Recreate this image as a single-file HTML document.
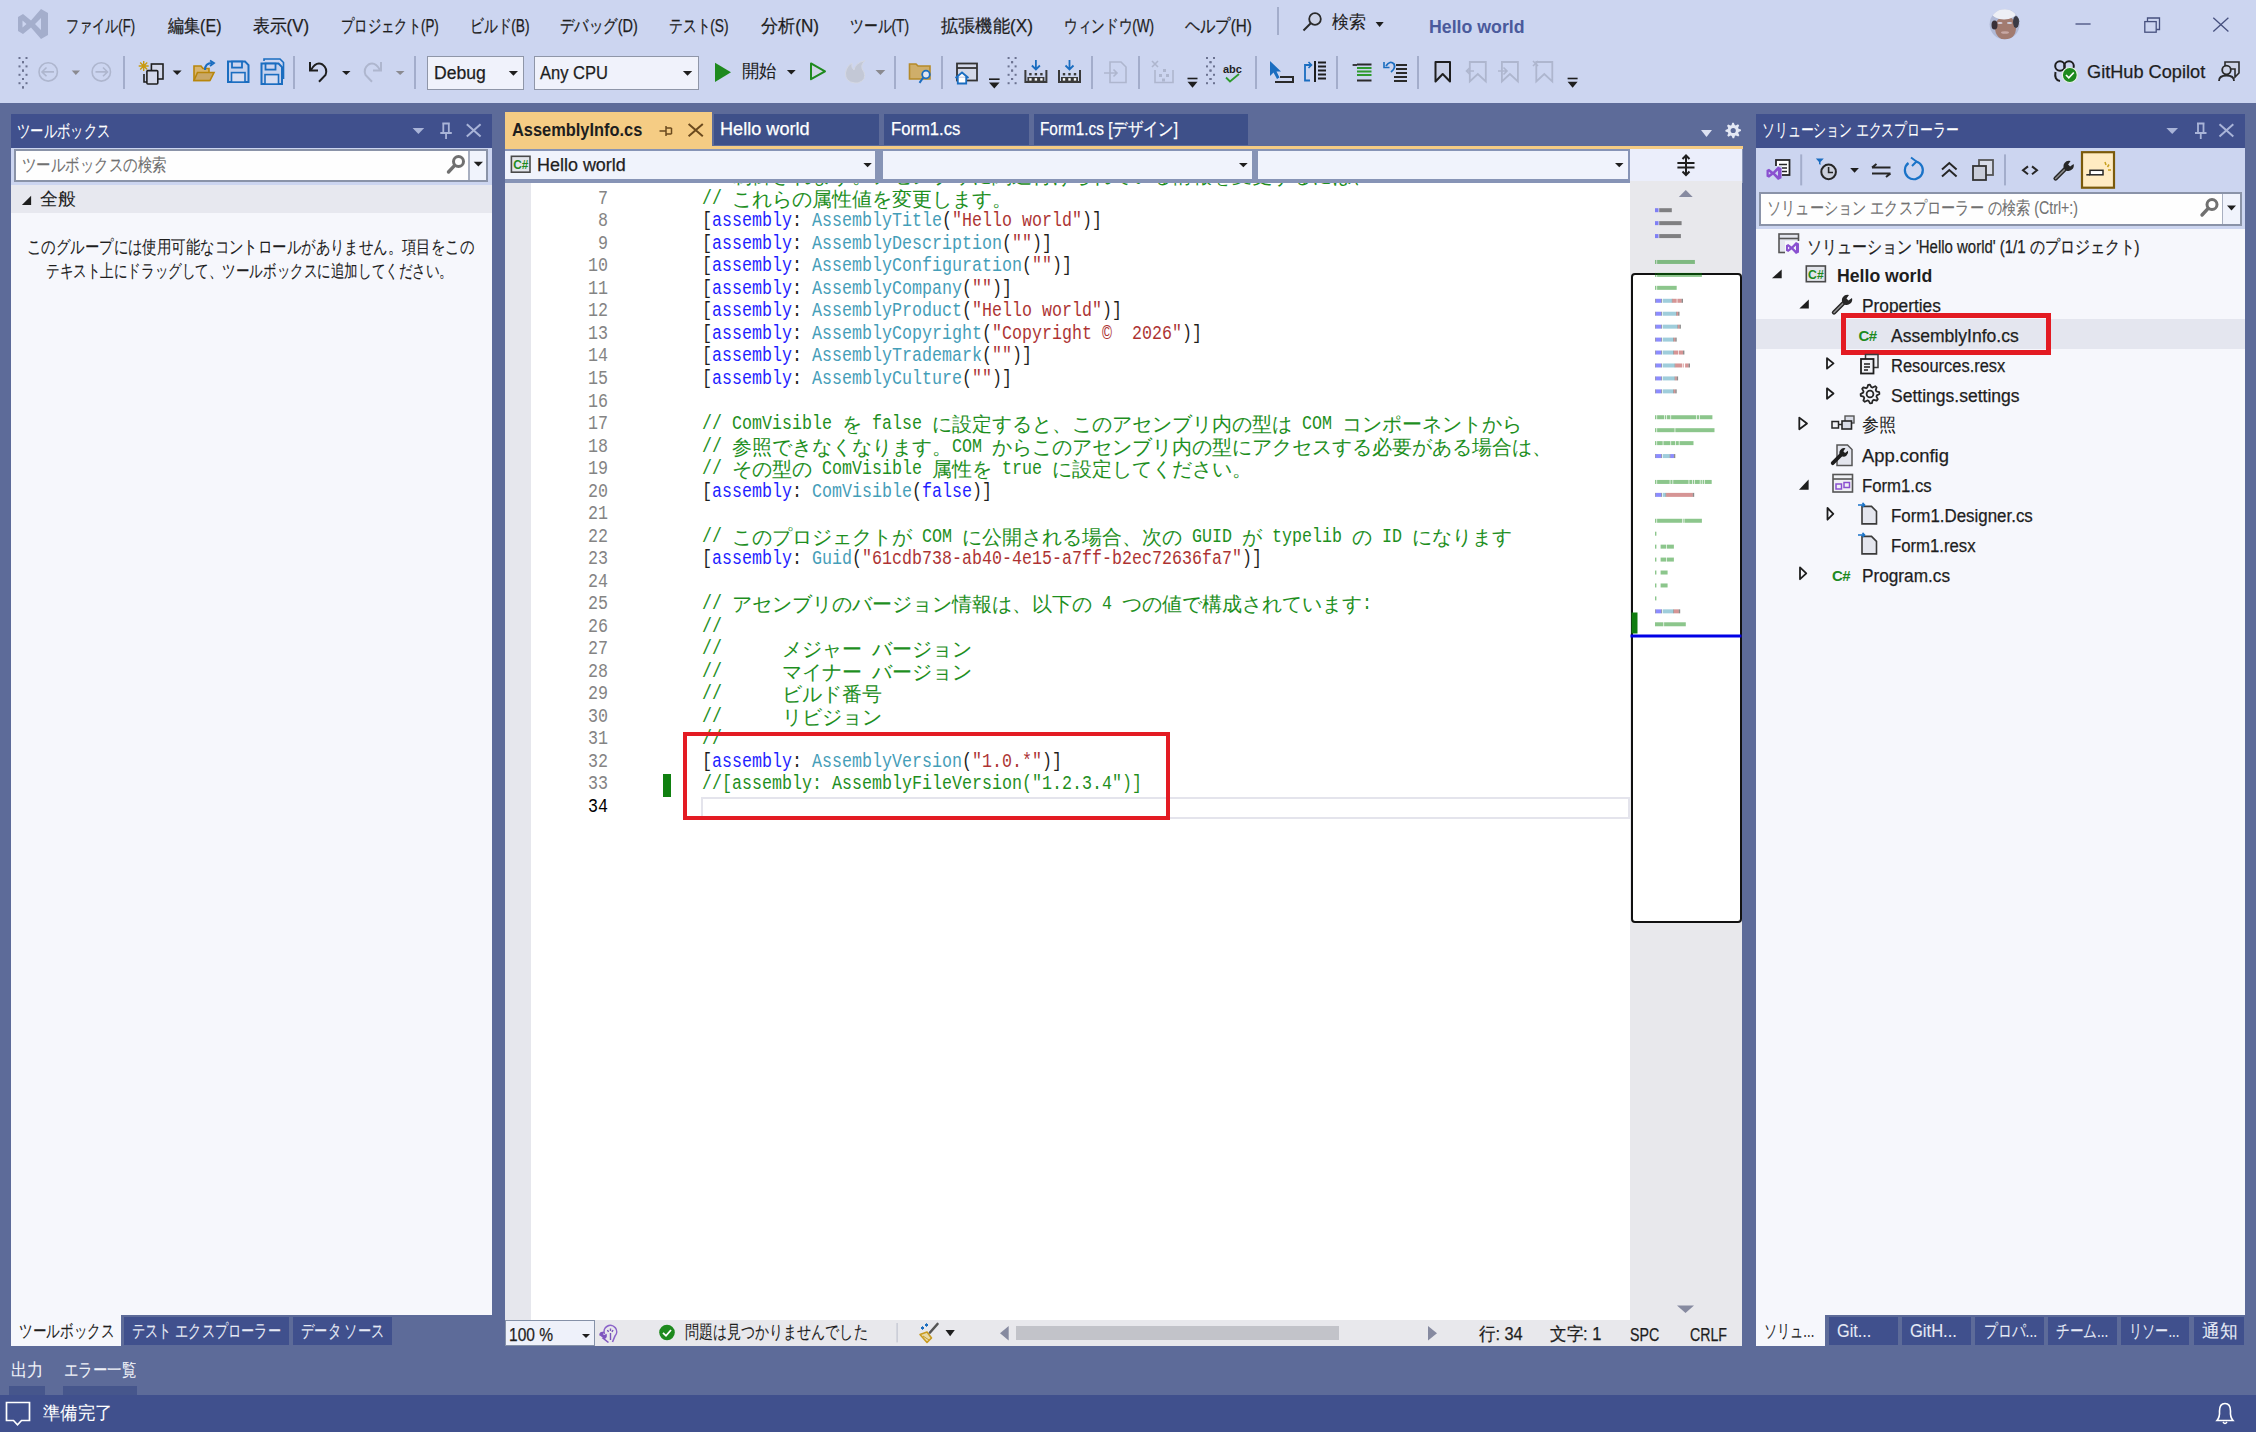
<!DOCTYPE html>
<html lang="ja"><head><meta charset="utf-8"><title>AssemblyInfo.cs - Visual Studio</title><style>
html,body{margin:0;padding:0;width:2256px;height:1432px;overflow:hidden;background:#5D6B99}
body{position:relative;font-family:"Liberation Sans",sans-serif}
body>div,body>svg{position:absolute}
.t{white-space:pre;line-height:1;-webkit-text-stroke:0.25px currentColor}
#ed{position:absolute;left:505px;top:183px;width:1125px;height:1137px;overflow:hidden}
#ed div{position:absolute;white-space:pre;line-height:1;font-family:"Liberation Mono",monospace;font-size:20px}
#ed span{opacity:0.88}
svg{overflow:visible}
</style></head><body>
<div style="left:0px;top:0px;width:2256px;height:103px;background:#CCD5F0;"></div>
<div style="left:0px;top:103px;width:2256px;height:1292px;background:#5D6B99;"></div>
<div style="left:0px;top:1395px;width:2256px;height:37px;background:#40508D;"></div>
<div class="t" style="left:66.0px;top:17.2px;font-size:18px;color:#1E1E1E;font-family:'Liberation Sans';transform:scaleX(0.7264);transform-origin:0 0;">ファイル(F)</div>
<div class="t" style="left:167.5px;top:17.2px;font-size:18px;color:#1E1E1E;font-family:'Liberation Sans';transform:scaleX(0.8917);transform-origin:0 0;">編集(E)</div>
<div class="t" style="left:253.0px;top:17.2px;font-size:18px;color:#1E1E1E;font-family:'Liberation Sans';transform:scaleX(0.9333);transform-origin:0 0;">表示(V)</div>
<div class="t" style="left:341.0px;top:17.2px;font-size:18px;color:#1E1E1E;font-family:'Liberation Sans';transform:scaleX(0.7402);transform-origin:0 0;">プロジェクト(P)</div>
<div class="t" style="left:470.0px;top:17.2px;font-size:18px;color:#1E1E1E;font-family:'Liberation Sans';transform:scaleX(0.7641);transform-origin:0 0;">ビルド(B)</div>
<div class="t" style="left:560.0px;top:17.2px;font-size:18px;color:#1E1E1E;font-family:'Liberation Sans';transform:scaleX(0.8021);transform-origin:0 0;">デバッグ(D)</div>
<div class="t" style="left:668.8px;top:17.2px;font-size:18px;color:#1E1E1E;font-family:'Liberation Sans';transform:scaleX(0.7641);transform-origin:0 0;">テスト(S)</div>
<div class="t" style="left:760.6px;top:17.2px;font-size:18px;color:#1E1E1E;font-family:'Liberation Sans';transform:scaleX(0.9508);transform-origin:0 0;">分析(N)</div>
<div class="t" style="left:850.0px;top:17.2px;font-size:18px;color:#1E1E1E;font-family:'Liberation Sans';transform:scaleX(0.7664);transform-origin:0 0;">ツール(T)</div>
<div class="t" style="left:941.0px;top:17.2px;font-size:18px;color:#1E1E1E;font-family:'Liberation Sans';transform:scaleX(0.9573);transform-origin:0 0;">拡張機能(X)</div>
<div class="t" style="left:1063.9px;top:17.2px;font-size:18px;color:#1E1E1E;font-family:'Liberation Sans';transform:scaleX(0.7572);transform-origin:0 0;">ウィンドウ(W)</div>
<div class="t" style="left:1185.0px;top:17.2px;font-size:18px;color:#1E1E1E;font-family:'Liberation Sans';transform:scaleX(0.8468);transform-origin:0 0;">ヘルプ(H)</div>
<div class="t" style="left:1331.9px;top:13.0px;font-size:18px;color:#1E1E1E;font-family:'Liberation Sans';transform:scaleX(0.9444);transform-origin:0 0;-webkit-text-stroke:0.08px currentColor;">検索</div>
<div class="t" style="left:1428.7px;top:18.2px;font-size:18px;color:#4A5A9C;font-family:'Liberation Sans';font-weight:bold;-webkit-text-stroke:0;transform:scaleX(0.9854);transform-origin:0 0;">Hello world</div>
<div style="left:427.4px;top:55.6px;width:97px;height:34.5px;background:#F0F2FB;border:1.6px solid #8F96A8;box-sizing:border-box"></div>
<div style="left:534.3px;top:55.6px;width:164.5px;height:34.5px;background:#F0F2FB;border:1.6px solid #8F96A8;box-sizing:border-box"></div>
<div class="t" style="left:434.0px;top:64.4px;font-size:18px;color:#1E1E1E;font-family:'Liberation Sans';transform:scaleX(0.9765);transform-origin:0 0;">Debug</div>
<div class="t" style="left:540.0px;top:64.4px;font-size:18px;color:#1E1E1E;font-family:'Liberation Sans';transform:scaleX(0.9185);transform-origin:0 0;">Any CPU</div>
<div class="t" style="left:742.0px;top:62.0px;font-size:18px;color:#1E1E1E;font-family:'Liberation Sans';transform:scaleX(0.9667);transform-origin:0 0;-webkit-text-stroke:0.08px currentColor;">開始</div>
<div class="t" style="left:2087.0px;top:63.3px;font-size:18px;color:#1E1E1E;font-family:'Liberation Sans';transform:scaleX(1.0097);transform-origin:0 0;">GitHub Copilot</div>
<div style="left:11px;top:114px;width:481px;height:34px;background:#40508D;"></div>
<div style="left:11px;top:148px;width:481px;height:37px;background:#CCD5F0;"></div>
<div style="left:14px;top:149px;width:474px;height:33px;background:#FEFEFE;border:2px solid #8A93A8;box-sizing:border-box"></div>
<div style="left:468px;top:151px;width:1.5px;height:29px;background:#A8AFC0;"></div>
<div style="left:469.5px;top:151px;width:16.5px;height:29px;background:#F0F3FC;"></div>
<div style="left:11px;top:185px;width:481px;height:28px;background:#E7E8EF;"></div>
<div style="left:11px;top:213px;width:481px;height:1102px;background:#F6F7FC;"></div>
<div style="left:11px;top:1315px;width:110px;height:31px;background:#F6F7FC;"></div>
<div class="t" style="left:17.3px;top:122.2px;font-size:18px;color:#FFFFFF;font-family:'Liberation Sans';transform:scaleX(0.7405);transform-origin:0 0;-webkit-text-stroke:0.08px currentColor;">ツールボックス</div>
<div class="t" style="left:21.9px;top:155.6px;font-size:18px;color:#717171;font-family:'Liberation Sans';transform:scaleX(0.8028);transform-origin:0 0;-webkit-text-stroke:0.08px currentColor;">ツールボックスの検索</div>
<div class="t" style="left:40.3px;top:190.2px;font-size:18px;color:#1E1E1E;font-family:'Liberation Sans';transform:scaleX(0.9917);transform-origin:0 0;-webkit-text-stroke:0.08px currentColor;">全般</div>
<div class="t" style="left:26.5px;top:237.5px;font-size:18px;color:#1E1E1E;font-family:'Liberation Sans';transform:scaleX(0.8014);transform-origin:0 0;-webkit-text-stroke:0.08px currentColor;">このグループには使用可能なコントロールがありません。項目をこの</div>
<div class="t" style="left:46.1px;top:261.7px;font-size:18px;color:#1E1E1E;font-family:'Liberation Sans';transform:scaleX(0.7535);transform-origin:0 0;-webkit-text-stroke:0.08px currentColor;">テキスト上にドラッグして、ツールボックスに追加してください。</div>
<div style="left:124px;top:1317px;width:165px;height:28px;background:#40508D;"></div>
<div style="left:293px;top:1317px;width:99px;height:28px;background:#40508D;"></div>
<div class="t" style="left:18.5px;top:1321.7px;font-size:18px;color:#1E1E1E;font-family:'Liberation Sans';transform:scaleX(0.7571);transform-origin:0 0;-webkit-text-stroke:0.08px currentColor;">ツールボックス</div>
<div class="t" style="left:132.4px;top:1321.7px;font-size:18px;color:#E6EAF5;font-family:'Liberation Sans';transform:scaleX(0.7334);transform-origin:0 0;-webkit-text-stroke:0.08px currentColor;">テスト エクスプローラー</div>
<div class="t" style="left:300.9px;top:1321.7px;font-size:18px;color:#E6EAF5;font-family:'Liberation Sans';transform:scaleX(0.7362);transform-origin:0 0;-webkit-text-stroke:0.08px currentColor;">データ ソース</div>
<div class="t" style="left:10.9px;top:1361.0px;font-size:18px;color:#F0F2F8;font-family:'Liberation Sans';transform:scaleX(0.9000);transform-origin:0 0;-webkit-text-stroke:0.08px currentColor;">出力</div>
<div class="t" style="left:64.0px;top:1361.0px;font-size:18px;color:#F0F2F8;font-family:'Liberation Sans';transform:scaleX(0.8000);transform-origin:0 0;-webkit-text-stroke:0.08px currentColor;">エラー一覧</div>
<div style="left:9px;top:1386px;width:36px;height:9px;background:#46568C;"></div>
<div style="left:63px;top:1386px;width:74px;height:9px;background:#46568C;"></div>
<div class="t" style="left:42.9px;top:1404.0px;font-size:18px;color:#FFFFFF;font-family:'Liberation Sans';transform:scaleX(0.9597);transform-origin:0 0;-webkit-text-stroke:0.08px currentColor;">準備完了</div>
<div style="left:505px;top:112px;width:207px;height:34px;background:#F5CC84;"></div>
<div style="left:714px;top:114px;width:165px;height:31px;background:#3E5089;"></div>
<div style="left:884px;top:114px;width:145px;height:31px;background:#3E5089;"></div>
<div style="left:1034px;top:114px;width:214px;height:31px;background:#3E5089;"></div>
<div style="left:505px;top:146px;width:1238px;height:3px;background:#F5CC84;"></div>
<div style="left:505px;top:149px;width:1238px;height:34px;background:#8794B6;"></div>
<div style="left:505px;top:151px;width:370px;height:28px;background:#F0F3FC;"></div>
<div style="left:883px;top:151px;width:369px;height:28px;background:#F0F3FC;"></div>
<div style="left:1258px;top:151px;width:370px;height:28px;background:#F0F3FC;"></div>
<div style="left:1630px;top:149px;width:112px;height:32px;background:#EBEEFB;"></div>
<div class="t" style="left:512.0px;top:120.7px;font-size:18px;color:#1E1E1E;font-family:'Liberation Sans';font-weight:bold;-webkit-text-stroke:0;transform:scaleX(0.9108);transform-origin:0 0;">AssemblyInfo.cs</div>
<div class="t" style="left:720.4px;top:120.0px;font-size:18px;color:#FFFFFF;font-family:'Liberation Sans';transform:scaleX(1.0062);transform-origin:0 0;">Hello world</div>
<div class="t" style="left:890.6px;top:120.0px;font-size:18px;color:#FFFFFF;font-family:'Liberation Sans';transform:scaleX(0.9251);transform-origin:0 0;">Form1.cs</div>
<div class="t" style="left:1040.0px;top:120.0px;font-size:18px;color:#FFFFFF;font-family:'Liberation Sans';transform:scaleX(0.8518);transform-origin:0 0;">Form1.cs [デザイン]</div>
<div class="t" style="left:536.8px;top:156.0px;font-size:18px;color:#1E1E1E;font-family:'Liberation Sans';transform:scaleX(0.9972);transform-origin:0 0;">Hello world</div>
<div style="left:505px;top:183px;width:1125px;height:1137px;background:#FFFFFF;"></div>
<div style="left:505px;top:183px;width:26px;height:1137px;background:#E6E7ED;"></div>
<div style="left:1630px;top:181px;width:112px;height:1139px;background:#E8E8EC;"></div>
<div style="left:505px;top:1320px;width:1237px;height:26px;background:#E8E8EC;"></div>
<div style="left:505px;top:1320px;width:90px;height:26px;background:#EEF1FA;border:1px solid #8591A8;box-sizing:border-box"></div>
<div class="t" style="left:509.0px;top:1326.0px;font-size:18px;color:#1E1E1E;font-family:'Liberation Sans';transform:scaleX(0.8620);transform-origin:0 0;">100 %</div>
<div class="t" style="left:684.8px;top:1323.0px;font-size:18px;color:#1E1E1E;font-family:'Liberation Sans';transform:scaleX(0.7803);transform-origin:0 0;-webkit-text-stroke:0.08px currentColor;">問題は見つかりませんでした</div>
<div class="t" style="left:1479.2px;top:1325.0px;font-size:18px;color:#1E1E1E;font-family:'Liberation Sans';transform:scaleX(0.9098);transform-origin:0 0;">行: 34</div>
<div class="t" style="left:1550.0px;top:1325.0px;font-size:18px;color:#1E1E1E;font-family:'Liberation Sans';transform:scaleX(0.9194);transform-origin:0 0;">文字: 1</div>
<div class="t" style="left:1629.8px;top:1325.5px;font-size:18px;color:#1E1E1E;font-family:'Liberation Sans';transform:scaleX(0.7889);transform-origin:0 0;">SPC</div>
<div class="t" style="left:1690.0px;top:1325.5px;font-size:18px;color:#1E1E1E;font-family:'Liberation Sans';transform:scaleX(0.7870);transform-origin:0 0;">CRLF</div>
<div style="left:1016px;top:1326px;width:323px;height:14px;background:#C2C3C9;"></div>
<div style="left:1756px;top:114px;width:489px;height:34px;background:#40508D;"></div>
<div style="left:1756px;top:148px;width:489px;height:81px;background:#CCD5F0;"></div>
<div style="left:1759px;top:192px;width:483px;height:34px;background:#FEFEFE;border:2px solid #8A93A8;box-sizing:border-box"></div>
<div style="left:2221.5px;top:194px;width:1.5px;height:30px;background:#A8AFC0;"></div>
<div style="left:2223px;top:194px;width:17px;height:30px;background:#F0F3FC;"></div>
<div style="left:1756px;top:229px;width:489px;height:1086px;background:#F6F7FC;"></div>
<div style="left:1756px;top:319px;width:489px;height:30px;background:#E4E6EF;"></div>
<div style="left:1756px;top:1315px;width:69px;height:31px;background:#F6F7FC;"></div>
<div class="t" style="left:1761.7px;top:120.9px;font-size:18px;color:#FFFFFF;font-family:'Liberation Sans';transform:scaleX(0.7152);transform-origin:0 0;-webkit-text-stroke:0.08px currentColor;">ソリューション エクスプローラー</div>
<div class="t" style="left:1767.0px;top:198.6px;font-size:18px;color:#717171;font-family:'Liberation Sans';transform:scaleX(0.7883);transform-origin:0 0;-webkit-text-stroke:0.08px currentColor;">ソリューション エクスプローラー の検索 (Ctrl+:)</div>
<div class="t" style="left:1807.4px;top:238.0px;font-size:18px;color:#1E1E1E;font-family:'Liberation Sans';transform:scaleX(0.8314);transform-origin:0 0;">ソリューション &#x27;Hello world&#x27; (1/1 のプロジェクト)</div>
<div class="t" style="left:1836.7px;top:266.6px;font-size:18px;color:#1E1E1E;font-family:'Liberation Sans';font-weight:bold;-webkit-text-stroke:0;transform:scaleX(0.9813);transform-origin:0 0;">Hello world</div>
<div class="t" style="left:1862.4px;top:296.7px;font-size:18px;color:#1E1E1E;font-family:'Liberation Sans';transform:scaleX(0.9616);transform-origin:0 0;">Properties</div>
<div class="t" style="left:1890.7px;top:326.8px;font-size:18px;color:#1E1E1E;font-family:'Liberation Sans';transform:scaleX(0.9745);transform-origin:0 0;">AssemblyInfo.cs</div>
<div class="t" style="left:1890.7px;top:356.8px;font-size:18px;color:#1E1E1E;font-family:'Liberation Sans';transform:scaleX(0.9141);transform-origin:0 0;">Resources.resx</div>
<div class="t" style="left:1890.7px;top:386.8px;font-size:18px;color:#1E1E1E;font-family:'Liberation Sans';transform:scaleX(0.9737);transform-origin:0 0;">Settings.settings</div>
<div class="t" style="left:1862.4px;top:415.8px;font-size:18px;color:#1E1E1E;font-family:'Liberation Sans';transform:scaleX(0.9528);transform-origin:0 0;-webkit-text-stroke:0.08px currentColor;">参照</div>
<div class="t" style="left:1862.4px;top:446.8px;font-size:18px;color:#1E1E1E;font-family:'Liberation Sans';transform:scaleX(1.0216);transform-origin:0 0;">App.config</div>
<div class="t" style="left:1862.4px;top:476.8px;font-size:18px;color:#1E1E1E;font-family:'Liberation Sans';transform:scaleX(0.9291);transform-origin:0 0;">Form1.cs</div>
<div class="t" style="left:1891.0px;top:506.8px;font-size:18px;color:#1E1E1E;font-family:'Liberation Sans';transform:scaleX(0.9387);transform-origin:0 0;">Form1.Designer.cs</div>
<div class="t" style="left:1891.0px;top:536.8px;font-size:18px;color:#1E1E1E;font-family:'Liberation Sans';transform:scaleX(0.9295);transform-origin:0 0;">Form1.resx</div>
<div class="t" style="left:1862.4px;top:566.8px;font-size:18px;color:#1E1E1E;font-family:'Liberation Sans';transform:scaleX(0.9562);transform-origin:0 0;">Program.cs</div>
<div class="t" style="left:1764.0px;top:1322.3px;font-size:18px;color:#1E1E1E;font-family:'Liberation Sans';transform:scaleX(0.7288);transform-origin:0 0;-webkit-text-stroke:0.08px currentColor;">ソリュ...</div>
<div style="left:1829px;top:1317px;width:69px;height:28px;background:#40508D;"></div>
<div class="t" style="left:1837.2px;top:1322.3px;font-size:18px;color:#E6EAF5;font-family:'Liberation Sans';transform:scaleX(0.9023);transform-origin:0 0;-webkit-text-stroke:0.08px currentColor;">Git...</div>
<div style="left:1902px;top:1317px;width:69px;height:28px;background:#40508D;"></div>
<div class="t" style="left:1910.4px;top:1322.3px;font-size:18px;color:#E6EAF5;font-family:'Liberation Sans';transform:scaleX(0.9193);transform-origin:0 0;-webkit-text-stroke:0.08px currentColor;">GitH...</div>
<div style="left:1975px;top:1317px;width:69px;height:28px;background:#40508D;"></div>
<div class="t" style="left:1983.6px;top:1322.3px;font-size:18px;color:#E6EAF5;font-family:'Liberation Sans';transform:scaleX(0.7694);transform-origin:0 0;-webkit-text-stroke:0.08px currentColor;">プロパ...</div>
<div style="left:2048px;top:1317px;width:69px;height:28px;background:#40508D;"></div>
<div class="t" style="left:2056.0px;top:1322.3px;font-size:18px;color:#E6EAF5;font-family:'Liberation Sans';transform:scaleX(0.7578);transform-origin:0 0;-webkit-text-stroke:0.08px currentColor;">チーム...</div>
<div style="left:2121px;top:1317px;width:68px;height:28px;background:#40508D;"></div>
<div class="t" style="left:2128.8px;top:1322.3px;font-size:18px;color:#E6EAF5;font-family:'Liberation Sans';transform:scaleX(0.7303);transform-origin:0 0;-webkit-text-stroke:0.08px currentColor;">リソー...</div>
<div style="left:2194px;top:1317px;width:50px;height:28px;background:#40508D;"></div>
<div class="t" style="left:2202.0px;top:1322.3px;font-size:18px;color:#E6EAF5;font-family:'Liberation Sans';transform:scaleX(0.9861);transform-origin:0 0;-webkit-text-stroke:0.08px currentColor;">通知</div>
<div style="left:1841px;top:313px;width:210px;height:42px;background:transparent;border:5px solid #E31B23;box-sizing:border-box"></div>
<div id="ed"><div style="left:195.5px;top:613.8px;width:925.5px;height:18px;border:2px solid #E4E4EC;box-sizing:content-box"></div><div style="left:93px;top:-16.7px;color:#848484;transform:scaleX(0.8333);transform-origin:0 0">6</div><div style="left:197px;top:-16.7px;transform:scaleX(0.8333);transform-origin:0 0"><span style="color:#008000">// </span></div><div style="left:227px;top:-14.7px"><span style="color:#008000">制御されます。アセンブリに関連付けられている情報を変更するには、</span></div><div style="left:93px;top:5.8px;color:#848484;transform:scaleX(0.8333);transform-origin:0 0">7</div><div style="left:197px;top:5.8px;transform:scaleX(0.8333);transform-origin:0 0"><span style="color:#008000">// </span></div><div style="left:227px;top:7.8px"><span style="color:#008000">これらの属性値を変更します。</span></div><div style="left:93px;top:28.3px;color:#848484;transform:scaleX(0.8333);transform-origin:0 0">8</div><div style="left:197px;top:28.3px;transform:scaleX(0.8333);transform-origin:0 0"><span style="color:#000000">[</span><span style="color:#0000FF">assembly</span><span style="color:#000000">: </span><span style="color:#2B91AF">AssemblyTitle</span><span style="color:#000000">(</span><span style="color:#A31515">&quot;Hello world&quot;</span><span style="color:#000000">)]</span></div><div style="left:93px;top:50.8px;color:#848484;transform:scaleX(0.8333);transform-origin:0 0">9</div><div style="left:197px;top:50.8px;transform:scaleX(0.8333);transform-origin:0 0"><span style="color:#000000">[</span><span style="color:#0000FF">assembly</span><span style="color:#000000">: </span><span style="color:#2B91AF">AssemblyDescription</span><span style="color:#000000">(</span><span style="color:#A31515">&quot;&quot;</span><span style="color:#000000">)]</span></div><div style="left:83px;top:73.4px;color:#848484;transform:scaleX(0.8333);transform-origin:0 0">10</div><div style="left:197px;top:73.4px;transform:scaleX(0.8333);transform-origin:0 0"><span style="color:#000000">[</span><span style="color:#0000FF">assembly</span><span style="color:#000000">: </span><span style="color:#2B91AF">AssemblyConfiguration</span><span style="color:#000000">(</span><span style="color:#A31515">&quot;&quot;</span><span style="color:#000000">)]</span></div><div style="left:83px;top:95.9px;color:#848484;transform:scaleX(0.8333);transform-origin:0 0">11</div><div style="left:197px;top:95.9px;transform:scaleX(0.8333);transform-origin:0 0"><span style="color:#000000">[</span><span style="color:#0000FF">assembly</span><span style="color:#000000">: </span><span style="color:#2B91AF">AssemblyCompany</span><span style="color:#000000">(</span><span style="color:#A31515">&quot;&quot;</span><span style="color:#000000">)]</span></div><div style="left:83px;top:118.4px;color:#848484;transform:scaleX(0.8333);transform-origin:0 0">12</div><div style="left:197px;top:118.4px;transform:scaleX(0.8333);transform-origin:0 0"><span style="color:#000000">[</span><span style="color:#0000FF">assembly</span><span style="color:#000000">: </span><span style="color:#2B91AF">AssemblyProduct</span><span style="color:#000000">(</span><span style="color:#A31515">&quot;Hello world&quot;</span><span style="color:#000000">)]</span></div><div style="left:83px;top:140.9px;color:#848484;transform:scaleX(0.8333);transform-origin:0 0">13</div><div style="left:197px;top:140.9px;transform:scaleX(0.8333);transform-origin:0 0"><span style="color:#000000">[</span><span style="color:#0000FF">assembly</span><span style="color:#000000">: </span><span style="color:#2B91AF">AssemblyCopyright</span><span style="color:#000000">(</span><span style="color:#A31515">&quot;Copyright ©  2026&quot;</span><span style="color:#000000">)]</span></div><div style="left:83px;top:163.4px;color:#848484;transform:scaleX(0.8333);transform-origin:0 0">14</div><div style="left:197px;top:163.4px;transform:scaleX(0.8333);transform-origin:0 0"><span style="color:#000000">[</span><span style="color:#0000FF">assembly</span><span style="color:#000000">: </span><span style="color:#2B91AF">AssemblyTrademark</span><span style="color:#000000">(</span><span style="color:#A31515">&quot;&quot;</span><span style="color:#000000">)]</span></div><div style="left:83px;top:186.0px;color:#848484;transform:scaleX(0.8333);transform-origin:0 0">15</div><div style="left:197px;top:186.0px;transform:scaleX(0.8333);transform-origin:0 0"><span style="color:#000000">[</span><span style="color:#0000FF">assembly</span><span style="color:#000000">: </span><span style="color:#2B91AF">AssemblyCulture</span><span style="color:#000000">(</span><span style="color:#A31515">&quot;&quot;</span><span style="color:#000000">)]</span></div><div style="left:83px;top:208.5px;color:#848484;transform:scaleX(0.8333);transform-origin:0 0">16</div><div style="left:83px;top:231.0px;color:#848484;transform:scaleX(0.8333);transform-origin:0 0">17</div><div style="left:197px;top:231.0px;transform:scaleX(0.8333);transform-origin:0 0"><span style="color:#008000">// ComVisible </span></div><div style="left:337px;top:233.0px"><span style="color:#008000">を</span></div><div style="left:357px;top:231.0px;transform:scaleX(0.8333);transform-origin:0 0"><span style="color:#008000"> false </span></div><div style="left:427px;top:233.0px"><span style="color:#008000">に設定すると、このアセンブリ内の型は</span></div><div style="left:787px;top:231.0px;transform:scaleX(0.8333);transform-origin:0 0"><span style="color:#008000"> COM </span></div><div style="left:837px;top:233.0px"><span style="color:#008000">コンポーネントから</span></div><div style="left:83px;top:253.5px;color:#848484;transform:scaleX(0.8333);transform-origin:0 0">18</div><div style="left:197px;top:253.5px;transform:scaleX(0.8333);transform-origin:0 0"><span style="color:#008000">// </span></div><div style="left:227px;top:255.5px"><span style="color:#008000">参照できなくなります。</span></div><div style="left:447px;top:253.5px;transform:scaleX(0.8333);transform-origin:0 0"><span style="color:#008000">COM </span></div><div style="left:487px;top:255.5px"><span style="color:#008000">からこのアセンブリ内の型にアクセスする必要がある場合は、</span></div><div style="left:83px;top:276.0px;color:#848484;transform:scaleX(0.8333);transform-origin:0 0">19</div><div style="left:197px;top:276.0px;transform:scaleX(0.8333);transform-origin:0 0"><span style="color:#008000">// </span></div><div style="left:227px;top:278.0px"><span style="color:#008000">その型の</span></div><div style="left:307px;top:276.0px;transform:scaleX(0.8333);transform-origin:0 0"><span style="color:#008000"> ComVisible </span></div><div style="left:427px;top:278.0px"><span style="color:#008000">属性を</span></div><div style="left:487px;top:276.0px;transform:scaleX(0.8333);transform-origin:0 0"><span style="color:#008000"> true </span></div><div style="left:547px;top:278.0px"><span style="color:#008000">に設定してください。</span></div><div style="left:83px;top:298.6px;color:#848484;transform:scaleX(0.8333);transform-origin:0 0">20</div><div style="left:197px;top:298.6px;transform:scaleX(0.8333);transform-origin:0 0"><span style="color:#000000">[</span><span style="color:#0000FF">assembly</span><span style="color:#000000">: </span><span style="color:#2B91AF">ComVisible</span><span style="color:#000000">(</span><span style="color:#0000FF">false</span><span style="color:#000000">)]</span></div><div style="left:83px;top:321.1px;color:#848484;transform:scaleX(0.8333);transform-origin:0 0">21</div><div style="left:83px;top:343.6px;color:#848484;transform:scaleX(0.8333);transform-origin:0 0">22</div><div style="left:197px;top:343.6px;transform:scaleX(0.8333);transform-origin:0 0"><span style="color:#008000">// </span></div><div style="left:227px;top:345.6px"><span style="color:#008000">このプロジェクトが</span></div><div style="left:407px;top:343.6px;transform:scaleX(0.8333);transform-origin:0 0"><span style="color:#008000"> COM </span></div><div style="left:457px;top:345.6px"><span style="color:#008000">に公開される場合、次の</span></div><div style="left:677px;top:343.6px;transform:scaleX(0.8333);transform-origin:0 0"><span style="color:#008000"> GUID </span></div><div style="left:737px;top:345.6px"><span style="color:#008000">が</span></div><div style="left:757px;top:343.6px;transform:scaleX(0.8333);transform-origin:0 0"><span style="color:#008000"> typelib </span></div><div style="left:847px;top:345.6px"><span style="color:#008000">の</span></div><div style="left:867px;top:343.6px;transform:scaleX(0.8333);transform-origin:0 0"><span style="color:#008000"> ID </span></div><div style="left:907px;top:345.6px"><span style="color:#008000">になります</span></div><div style="left:83px;top:366.1px;color:#848484;transform:scaleX(0.8333);transform-origin:0 0">23</div><div style="left:197px;top:366.1px;transform:scaleX(0.8333);transform-origin:0 0"><span style="color:#000000">[</span><span style="color:#0000FF">assembly</span><span style="color:#000000">: </span><span style="color:#2B91AF">Guid</span><span style="color:#000000">(</span><span style="color:#A31515">&quot;61cdb738-ab40-4e15-a7ff-b2ec72636fa7&quot;</span><span style="color:#000000">)]</span></div><div style="left:83px;top:388.6px;color:#848484;transform:scaleX(0.8333);transform-origin:0 0">24</div><div style="left:83px;top:411.2px;color:#848484;transform:scaleX(0.8333);transform-origin:0 0">25</div><div style="left:197px;top:411.2px;transform:scaleX(0.8333);transform-origin:0 0"><span style="color:#008000">// </span></div><div style="left:227px;top:413.2px"><span style="color:#008000">アセンブリのバージョン情報は、以下の</span></div><div style="left:587px;top:411.2px;transform:scaleX(0.8333);transform-origin:0 0"><span style="color:#008000"> 4 </span></div><div style="left:617px;top:413.2px"><span style="color:#008000">つの値で構成されています</span></div><div style="left:857px;top:411.2px;transform:scaleX(0.8333);transform-origin:0 0"><span style="color:#008000">:</span></div><div style="left:83px;top:433.7px;color:#848484;transform:scaleX(0.8333);transform-origin:0 0">26</div><div style="left:197px;top:433.7px;transform:scaleX(0.8333);transform-origin:0 0"><span style="color:#008000">//</span></div><div style="left:83px;top:456.2px;color:#848484;transform:scaleX(0.8333);transform-origin:0 0">27</div><div style="left:197px;top:456.2px;transform:scaleX(0.8333);transform-origin:0 0"><span style="color:#008000">//      </span></div><div style="left:277px;top:458.2px"><span style="color:#008000">メジャー</span></div><div style="left:357px;top:456.2px;transform:scaleX(0.8333);transform-origin:0 0"><span style="color:#008000"> </span></div><div style="left:367px;top:458.2px"><span style="color:#008000">バージョン</span></div><div style="left:83px;top:478.7px;color:#848484;transform:scaleX(0.8333);transform-origin:0 0">28</div><div style="left:197px;top:478.7px;transform:scaleX(0.8333);transform-origin:0 0"><span style="color:#008000">//      </span></div><div style="left:277px;top:480.7px"><span style="color:#008000">マイナー</span></div><div style="left:357px;top:478.7px;transform:scaleX(0.8333);transform-origin:0 0"><span style="color:#008000"> </span></div><div style="left:367px;top:480.7px"><span style="color:#008000">バージョン</span></div><div style="left:83px;top:501.2px;color:#848484;transform:scaleX(0.8333);transform-origin:0 0">29</div><div style="left:197px;top:501.2px;transform:scaleX(0.8333);transform-origin:0 0"><span style="color:#008000">//      </span></div><div style="left:277px;top:503.2px"><span style="color:#008000">ビルド番号</span></div><div style="left:83px;top:523.8px;color:#848484;transform:scaleX(0.8333);transform-origin:0 0">30</div><div style="left:197px;top:523.8px;transform:scaleX(0.8333);transform-origin:0 0"><span style="color:#008000">//      </span></div><div style="left:277px;top:525.8px"><span style="color:#008000">リビジョン</span></div><div style="left:83px;top:546.3px;color:#848484;transform:scaleX(0.8333);transform-origin:0 0">31</div><div style="left:197px;top:546.3px;transform:scaleX(0.8333);transform-origin:0 0"><span style="color:#008000">//</span></div><div style="left:83px;top:568.8px;color:#848484;transform:scaleX(0.8333);transform-origin:0 0">32</div><div style="left:197px;top:568.8px;transform:scaleX(0.8333);transform-origin:0 0"><span style="color:#000000">[</span><span style="color:#0000FF">assembly</span><span style="color:#000000">: </span><span style="color:#2B91AF">AssemblyVersion</span><span style="color:#000000">(</span><span style="color:#A31515">&quot;1.0.*&quot;</span><span style="color:#000000">)]</span></div><div style="left:83px;top:591.3px;color:#848484;transform:scaleX(0.8333);transform-origin:0 0">33</div><div style="left:197px;top:591.3px;transform:scaleX(0.8333);transform-origin:0 0"><span style="color:#008000">//[assembly: AssemblyFileVersion(&quot;1.2.3.4&quot;)]</span></div><div style="left:83px;top:613.8px;color:#000000;transform:scaleX(0.8333);transform-origin:0 0">34</div><div style="left:158px;top:590.6px;width:8px;height:23px;background:#108010"></div><div style="left:178px;top:549px;width:487px;height:87.5px;border:4px solid #E31B23;box-sizing:border-box"></div></div>
<div style="left:1630.5px;top:272.5px;width:111px;height:650px;background:#FFFFFF;border:2px solid #111;border-radius:4px;box-sizing:border-box"></div><svg style="left:0;top:0;position:absolute" width="2256" height="1432"><rect x="1655.00" y="208.20" width="3.50" height="4" fill="#0000FF" opacity="0.45"/><rect x="1659.20" y="208.20" width="12.60" height="4" fill="#000000" opacity="0.45"/><rect x="1655.00" y="221.14" width="3.50" height="4" fill="#0000FF" opacity="0.45"/><rect x="1659.20" y="221.14" width="22.40" height="4" fill="#000000" opacity="0.45"/><rect x="1655.00" y="234.08" width="3.50" height="4" fill="#0000FF" opacity="0.45"/><rect x="1659.20" y="234.08" width="21.70" height="4" fill="#000000" opacity="0.45"/><rect x="1655.00" y="259.96" width="1.40" height="4" fill="#008000" opacity="0.45"/><rect x="1657.10" y="259.96" width="37.80" height="4" fill="#008000" opacity="0.45"/><rect x="1655.00" y="272.90" width="1.40" height="4" fill="#008000" opacity="0.45"/><rect x="1657.10" y="272.90" width="44.80" height="4" fill="#008000" opacity="0.45"/><rect x="1655.00" y="285.84" width="1.40" height="4" fill="#008000" opacity="0.45"/><rect x="1657.10" y="285.84" width="19.60" height="4" fill="#008000" opacity="0.45"/><rect x="1655.00" y="298.78" width="0.70" height="4" fill="#000000" opacity="0.45"/><rect x="1655.70" y="298.78" width="5.60" height="4" fill="#0000FF" opacity="0.45"/><rect x="1661.30" y="298.78" width="0.70" height="4" fill="#000000" opacity="0.45"/><rect x="1662.70" y="298.78" width="9.10" height="4" fill="#2B91AF" opacity="0.45"/><rect x="1671.80" y="298.78" width="0.70" height="4" fill="#000000" opacity="0.45"/><rect x="1672.50" y="298.78" width="4.20" height="4" fill="#A31515" opacity="0.45"/><rect x="1677.40" y="298.78" width="4.20" height="4" fill="#A31515" opacity="0.45"/><rect x="1681.60" y="298.78" width="1.40" height="4" fill="#000000" opacity="0.45"/><rect x="1655.00" y="311.72" width="0.70" height="4" fill="#000000" opacity="0.45"/><rect x="1655.70" y="311.72" width="5.60" height="4" fill="#0000FF" opacity="0.45"/><rect x="1661.30" y="311.72" width="0.70" height="4" fill="#000000" opacity="0.45"/><rect x="1662.70" y="311.72" width="13.30" height="4" fill="#2B91AF" opacity="0.45"/><rect x="1676.00" y="311.72" width="0.70" height="4" fill="#000000" opacity="0.45"/><rect x="1676.70" y="311.72" width="1.40" height="4" fill="#A31515" opacity="0.45"/><rect x="1678.10" y="311.72" width="1.40" height="4" fill="#000000" opacity="0.45"/><rect x="1655.00" y="324.66" width="0.70" height="4" fill="#000000" opacity="0.45"/><rect x="1655.70" y="324.66" width="5.60" height="4" fill="#0000FF" opacity="0.45"/><rect x="1661.30" y="324.66" width="0.70" height="4" fill="#000000" opacity="0.45"/><rect x="1662.70" y="324.66" width="14.70" height="4" fill="#2B91AF" opacity="0.45"/><rect x="1677.40" y="324.66" width="0.70" height="4" fill="#000000" opacity="0.45"/><rect x="1678.10" y="324.66" width="1.40" height="4" fill="#A31515" opacity="0.45"/><rect x="1679.50" y="324.66" width="1.40" height="4" fill="#000000" opacity="0.45"/><rect x="1655.00" y="337.60" width="0.70" height="4" fill="#000000" opacity="0.45"/><rect x="1655.70" y="337.60" width="5.60" height="4" fill="#0000FF" opacity="0.45"/><rect x="1661.30" y="337.60" width="0.70" height="4" fill="#000000" opacity="0.45"/><rect x="1662.70" y="337.60" width="10.50" height="4" fill="#2B91AF" opacity="0.45"/><rect x="1673.20" y="337.60" width="0.70" height="4" fill="#000000" opacity="0.45"/><rect x="1673.90" y="337.60" width="1.40" height="4" fill="#A31515" opacity="0.45"/><rect x="1675.30" y="337.60" width="1.40" height="4" fill="#000000" opacity="0.45"/><rect x="1655.00" y="350.54" width="0.70" height="4" fill="#000000" opacity="0.45"/><rect x="1655.70" y="350.54" width="5.60" height="4" fill="#0000FF" opacity="0.45"/><rect x="1661.30" y="350.54" width="0.70" height="4" fill="#000000" opacity="0.45"/><rect x="1662.70" y="350.54" width="10.50" height="4" fill="#2B91AF" opacity="0.45"/><rect x="1673.20" y="350.54" width="0.70" height="4" fill="#000000" opacity="0.45"/><rect x="1673.90" y="350.54" width="4.20" height="4" fill="#A31515" opacity="0.45"/><rect x="1678.80" y="350.54" width="4.20" height="4" fill="#A31515" opacity="0.45"/><rect x="1683.00" y="350.54" width="1.40" height="4" fill="#000000" opacity="0.45"/><rect x="1655.00" y="363.48" width="0.70" height="4" fill="#000000" opacity="0.45"/><rect x="1655.70" y="363.48" width="5.60" height="4" fill="#0000FF" opacity="0.45"/><rect x="1661.30" y="363.48" width="0.70" height="4" fill="#000000" opacity="0.45"/><rect x="1662.70" y="363.48" width="11.90" height="4" fill="#2B91AF" opacity="0.45"/><rect x="1674.60" y="363.48" width="0.70" height="4" fill="#000000" opacity="0.45"/><rect x="1675.30" y="363.48" width="7.00" height="4" fill="#A31515" opacity="0.45"/><rect x="1683.00" y="363.48" width="0.70" height="4" fill="#A31515" opacity="0.45"/><rect x="1685.10" y="363.48" width="3.50" height="4" fill="#A31515" opacity="0.45"/><rect x="1688.60" y="363.48" width="1.40" height="4" fill="#000000" opacity="0.45"/><rect x="1655.00" y="376.42" width="0.70" height="4" fill="#000000" opacity="0.45"/><rect x="1655.70" y="376.42" width="5.60" height="4" fill="#0000FF" opacity="0.45"/><rect x="1661.30" y="376.42" width="0.70" height="4" fill="#000000" opacity="0.45"/><rect x="1662.70" y="376.42" width="11.90" height="4" fill="#2B91AF" opacity="0.45"/><rect x="1674.60" y="376.42" width="0.70" height="4" fill="#000000" opacity="0.45"/><rect x="1675.30" y="376.42" width="1.40" height="4" fill="#A31515" opacity="0.45"/><rect x="1676.70" y="376.42" width="1.40" height="4" fill="#000000" opacity="0.45"/><rect x="1655.00" y="389.36" width="0.70" height="4" fill="#000000" opacity="0.45"/><rect x="1655.70" y="389.36" width="5.60" height="4" fill="#0000FF" opacity="0.45"/><rect x="1661.30" y="389.36" width="0.70" height="4" fill="#000000" opacity="0.45"/><rect x="1662.70" y="389.36" width="10.50" height="4" fill="#2B91AF" opacity="0.45"/><rect x="1673.20" y="389.36" width="0.70" height="4" fill="#000000" opacity="0.45"/><rect x="1673.90" y="389.36" width="1.40" height="4" fill="#A31515" opacity="0.45"/><rect x="1675.30" y="389.36" width="1.40" height="4" fill="#000000" opacity="0.45"/><rect x="1655.00" y="415.24" width="1.40" height="4" fill="#008000" opacity="0.45"/><rect x="1657.10" y="415.24" width="7.00" height="4" fill="#008000" opacity="0.45"/><rect x="1664.80" y="415.24" width="1.40" height="4" fill="#008000" opacity="0.45"/><rect x="1666.90" y="415.24" width="3.50" height="4" fill="#008000" opacity="0.45"/><rect x="1671.10" y="415.24" width="25.20" height="4" fill="#008000" opacity="0.45"/><rect x="1697.00" y="415.24" width="2.10" height="4" fill="#008000" opacity="0.45"/><rect x="1699.80" y="415.24" width="12.60" height="4" fill="#008000" opacity="0.45"/><rect x="1655.00" y="428.18" width="1.40" height="4" fill="#008000" opacity="0.45"/><rect x="1657.10" y="428.18" width="17.50" height="4" fill="#008000" opacity="0.45"/><rect x="1675.30" y="428.18" width="39.20" height="4" fill="#008000" opacity="0.45"/><rect x="1655.00" y="441.12" width="1.40" height="4" fill="#008000" opacity="0.45"/><rect x="1657.10" y="441.12" width="5.60" height="4" fill="#008000" opacity="0.45"/><rect x="1663.40" y="441.12" width="7.00" height="4" fill="#008000" opacity="0.45"/><rect x="1671.10" y="441.12" width="4.20" height="4" fill="#008000" opacity="0.45"/><rect x="1676.00" y="441.12" width="2.80" height="4" fill="#008000" opacity="0.45"/><rect x="1679.50" y="441.12" width="14.00" height="4" fill="#008000" opacity="0.45"/><rect x="1655.00" y="454.06" width="0.70" height="4" fill="#000000" opacity="0.45"/><rect x="1655.70" y="454.06" width="5.60" height="4" fill="#0000FF" opacity="0.45"/><rect x="1661.30" y="454.06" width="0.70" height="4" fill="#000000" opacity="0.45"/><rect x="1662.70" y="454.06" width="7.00" height="4" fill="#2B91AF" opacity="0.45"/><rect x="1669.70" y="454.06" width="0.70" height="4" fill="#000000" opacity="0.45"/><rect x="1670.40" y="454.06" width="3.50" height="4" fill="#0000FF" opacity="0.45"/><rect x="1673.90" y="454.06" width="1.40" height="4" fill="#000000" opacity="0.45"/><rect x="1655.00" y="479.94" width="1.40" height="4" fill="#008000" opacity="0.45"/><rect x="1657.10" y="479.94" width="12.60" height="4" fill="#008000" opacity="0.45"/><rect x="1670.40" y="479.94" width="2.10" height="4" fill="#008000" opacity="0.45"/><rect x="1673.20" y="479.94" width="15.40" height="4" fill="#008000" opacity="0.45"/><rect x="1689.30" y="479.94" width="2.80" height="4" fill="#008000" opacity="0.45"/><rect x="1692.80" y="479.94" width="1.40" height="4" fill="#008000" opacity="0.45"/><rect x="1694.90" y="479.94" width="4.90" height="4" fill="#008000" opacity="0.45"/><rect x="1700.50" y="479.94" width="1.40" height="4" fill="#008000" opacity="0.45"/><rect x="1702.60" y="479.94" width="1.40" height="4" fill="#008000" opacity="0.45"/><rect x="1704.70" y="479.94" width="7.00" height="4" fill="#008000" opacity="0.45"/><rect x="1655.00" y="492.88" width="0.70" height="4" fill="#000000" opacity="0.45"/><rect x="1655.70" y="492.88" width="5.60" height="4" fill="#0000FF" opacity="0.45"/><rect x="1661.30" y="492.88" width="0.70" height="4" fill="#000000" opacity="0.45"/><rect x="1662.70" y="492.88" width="2.80" height="4" fill="#2B91AF" opacity="0.45"/><rect x="1665.50" y="492.88" width="0.70" height="4" fill="#000000" opacity="0.45"/><rect x="1666.20" y="492.88" width="26.60" height="4" fill="#A31515" opacity="0.45"/><rect x="1692.80" y="492.88" width="1.40" height="4" fill="#000000" opacity="0.45"/><rect x="1655.00" y="518.76" width="1.40" height="4" fill="#008000" opacity="0.45"/><rect x="1657.10" y="518.76" width="25.20" height="4" fill="#008000" opacity="0.45"/><rect x="1683.00" y="518.76" width="0.70" height="4" fill="#008000" opacity="0.45"/><rect x="1684.40" y="518.76" width="17.50" height="4" fill="#008000" opacity="0.45"/><rect x="1655.00" y="531.70" width="1.40" height="4" fill="#008000" opacity="0.45"/><rect x="1655.00" y="544.64" width="1.40" height="4" fill="#008000" opacity="0.45"/><rect x="1660.60" y="544.64" width="5.60" height="4" fill="#008000" opacity="0.45"/><rect x="1666.90" y="544.64" width="7.00" height="4" fill="#008000" opacity="0.45"/><rect x="1655.00" y="557.58" width="1.40" height="4" fill="#008000" opacity="0.45"/><rect x="1660.60" y="557.58" width="5.60" height="4" fill="#008000" opacity="0.45"/><rect x="1666.90" y="557.58" width="7.00" height="4" fill="#008000" opacity="0.45"/><rect x="1655.00" y="570.52" width="1.40" height="4" fill="#008000" opacity="0.45"/><rect x="1660.60" y="570.52" width="7.00" height="4" fill="#008000" opacity="0.45"/><rect x="1655.00" y="583.46" width="1.40" height="4" fill="#008000" opacity="0.45"/><rect x="1660.60" y="583.46" width="7.00" height="4" fill="#008000" opacity="0.45"/><rect x="1655.00" y="596.40" width="1.40" height="4" fill="#008000" opacity="0.45"/><rect x="1655.00" y="609.34" width="0.70" height="4" fill="#000000" opacity="0.45"/><rect x="1655.70" y="609.34" width="5.60" height="4" fill="#0000FF" opacity="0.45"/><rect x="1661.30" y="609.34" width="0.70" height="4" fill="#000000" opacity="0.45"/><rect x="1662.70" y="609.34" width="10.50" height="4" fill="#2B91AF" opacity="0.45"/><rect x="1673.20" y="609.34" width="0.70" height="4" fill="#000000" opacity="0.45"/><rect x="1673.90" y="609.34" width="4.90" height="4" fill="#A31515" opacity="0.45"/><rect x="1678.80" y="609.34" width="1.40" height="4" fill="#000000" opacity="0.45"/><rect x="1655.00" y="622.28" width="8.40" height="4" fill="#008000" opacity="0.45"/><rect x="1664.10" y="622.28" width="21.70" height="4" fill="#008000" opacity="0.45"/><rect x="1630.5" y="634.5" width="111" height="3" fill="#0000E6"/><rect x="1631.5" y="612.5" width="6" height="21" fill="#107C10"/></svg>
<svg style="left:0;top:0" width="2256" height="1432" viewBox="0 0 2256 1432"><path d="M18 17 L23 14 L31 20.5 L31 27.5 L23 34 L18 31 Z M22.5 20.5 V27.5 L26.5 24 Z" fill="#A4AECC" fill-rule="evenodd"/><path d="M31 20.5 L41 9 L48 13 V35 L41 39 L31 27.5 Z M41 18 L35 24 L41 30 Z" fill="#A4AECC" fill-rule="evenodd"/><circle cx="1315" cy="19" r="5.8" fill="#CDD3E6" stroke="#2A2A2A" stroke-width="1.8"/><path d="M1311 23 L1303.5 30.5" stroke="#2A2A2A" stroke-width="2"/><path d="M1375.6 22H1383.7L1379.65 27Z" fill="#1E1E1E"/><rect x="1277" y="7" width="2" height="28" fill="#A3ADCB"/><clipPath id="av"><circle cx="2004.6" cy="24.3" r="15"/></clipPath><g clip-path="url(#av)"><rect x="1989" y="8" width="32" height="32" fill="#B0B9D6"/><ellipse cx="2005.5" cy="28" rx="10.5" ry="12" fill="#A27B70"/><ellipse cx="1994.5" cy="25" rx="3" ry="4.5" fill="#3A3038"/><ellipse cx="2016" cy="22" rx="3" ry="6" fill="#3A3A44"/><ellipse cx="2004" cy="13" rx="12" ry="6.5" fill="#EDEFF5"/><path d="M2010 8.5 Q2020 12 2019 22" fill="none" stroke="#44474F" stroke-width="2"/><ellipse cx="2000" cy="23" rx="2.6" ry="1.1" fill="#D9D2DE"/><ellipse cx="2009.5" cy="23" rx="2.6" ry="1.1" fill="#D0D4E6"/><ellipse cx="2005" cy="32.5" rx="4" ry="1.3" fill="#C8A8A4"/></g><path d="M2075.5 24 H2090.6" stroke="#46507E" stroke-width="1.3"/><rect x="2144.8" y="21.6" width="11.4" height="10.6" fill="none" stroke="#46507E" stroke-width="1.3"/><path d="M2147.5 21.6 V18 H2159.5 V29.5 H2156.2" fill="none" stroke="#46507E" stroke-width="1.3"/><path d="M2213.3 17.7 L2228.4 31.5 M2228.4 17.7 L2213.3 31.5" stroke="#46507E" stroke-width="1.3"/><rect x="18.5" y="57" width="2" height="2" fill="#6B7290"/><rect x="25.5" y="57" width="2" height="2" fill="#6B7290"/><rect x="22.0" y="61.2" width="2" height="2" fill="#6B7290"/><rect x="22.0" y="61.2" width="2" height="2" fill="#6B7290"/><rect x="18.5" y="65.4" width="2" height="2" fill="#6B7290"/><rect x="25.5" y="65.4" width="2" height="2" fill="#6B7290"/><rect x="22.0" y="69.60000000000001" width="2" height="2" fill="#6B7290"/><rect x="22.0" y="69.60000000000001" width="2" height="2" fill="#6B7290"/><rect x="18.5" y="73.80000000000001" width="2" height="2" fill="#6B7290"/><rect x="25.5" y="73.80000000000001" width="2" height="2" fill="#6B7290"/><rect x="22.0" y="78.00000000000001" width="2" height="2" fill="#6B7290"/><rect x="22.0" y="78.00000000000001" width="2" height="2" fill="#6B7290"/><rect x="18.5" y="82.20000000000002" width="2" height="2" fill="#6B7290"/><rect x="25.5" y="82.20000000000002" width="2" height="2" fill="#6B7290"/><rect x="22.0" y="86.40000000000002" width="2" height="2" fill="#6B7290"/><rect x="22.0" y="86.40000000000002" width="2" height="2" fill="#6B7290"/><circle cx="48.2" cy="71.9" r="9.2" fill="none" stroke="#AEB6CE" stroke-width="1.6"/><path d="M54 71.9 H42.5 M46.5 67.5 L42 71.9 L46.5 76.3" fill="none" stroke="#AEB6CE" stroke-width="1.6"/><path d="M71.7 70.6H80L75.85 75Z" fill="#8A8A90"/><circle cx="101.3" cy="71.9" r="9.2" fill="none" stroke="#AEB6CE" stroke-width="1.6"/><path d="M95.5 71.9 H107 M103 67.5 L107.5 71.9 L103 76.3" fill="none" stroke="#AEB6CE" stroke-width="1.6"/><rect x="123" y="56" width="2" height="33" fill="#A3ADCB"/><g stroke="#C89A10" stroke-width="1.4"><path d="M143.7 61 V71 M138.7 66 H148.7 M140.2 62.5 L147.2 69.5 M147.2 62.5 L140.2 69.5"/></g><rect x="151.4" y="64" width="11.6" height="15" fill="#D3D8EA" stroke="#1E1E1E" stroke-width="1.6"/><rect x="146.9" y="70.6" width="10.9" height="13.4" rx="1" fill="#D3D8EA" stroke="#1E1E1E" stroke-width="1.6"/><path d="M144 74 V82 H147" fill="none" stroke="#1E1E1E" stroke-width="1.6"/><path d="M172.6 70.6H181.6L177.1 75Z" fill="#1E1E1E"/><path d="M194 66 H201 L203 68.5 H209 V80.5 H194 Z" fill="#D9B56E" stroke="#B8860B" stroke-width="1.6"/><path d="M194 80.5 L197.5 72.5 H214 L210 80.5 Z" fill="#C9A766" stroke="#B8860B" stroke-width="1.6"/><path d="M205 70 Q205 63 212 63" fill="none" stroke="#1A6DC0" stroke-width="2"/><path d="M210 60.5 L214 63 L210 66" fill="none" stroke="#1A6DC0" stroke-width="1.8"/><path d="M228 61.6 H245 L248.5 65.1 V82.1 H228 Z" fill="#C6D2EE" stroke="#1A6DC0" stroke-width="2"/><rect x="232" y="61.6" width="10" height="6" fill="#CCD5F0" stroke="#1A6DC0" stroke-width="1.8"/><rect x="231.5" y="72.6" width="13.5" height="9.5" fill="#D6DDF2" stroke="#1A6DC0" stroke-width="1.6"/><path d="M264 61 V59 H280 L283.5 62.5 V79" fill="none" stroke="#1A6DC0" stroke-width="1.6"/><path d="M261.5 63.6 H278.5 L282.0 67.1 V84.1 H261.5 Z" fill="#C6D2EE" stroke="#1A6DC0" stroke-width="2"/><rect x="265.5" y="63.6" width="10" height="6" fill="#CCD5F0" stroke="#1A6DC0" stroke-width="1.8"/><rect x="265.0" y="74.6" width="13.5" height="9.5" fill="#D6DDF2" stroke="#1A6DC0" stroke-width="1.6"/><rect x="293" y="56" width="2" height="33" fill="#A3ADCB"/><path d="M311 70 Q316 61 322.5 64.5 Q328 68.5 325.5 75 L319 81.7" fill="none" stroke="#1E1E1E" stroke-width="2"/><path d="M310 62 V70.5 H318" fill="none" stroke="#1E1E1E" stroke-width="2"/><path d="M342 70.9H350.5L346.25 75.1Z" fill="#1E1E1E"/><path d="M380 70 Q375 61 368.5 64.5 Q363 68.5 365.5 75 L372 81.7" fill="none" stroke="#AEB6CE" stroke-width="2"/><path d="M381 62 V70.5 H373" fill="none" stroke="#AEB6CE" stroke-width="2"/><path d="M395.8 70.9H404.5L400.15 75.1Z" fill="#8A8A90"/><rect x="414" y="56" width="2" height="33" fill="#A3ADCB"/><path d="M508.8 70.9H518L513.4 75.7Z" fill="#1E1E1E"/><path d="M682.9 70.9H692.2L687.55 75.7Z" fill="#1E1E1E"/><path d="M715 62.8 L731 72.3 L715 81.9 Z" fill="#1E8A1E"/><path d="M786.9 69.9H795.7L791.3 74.5Z" fill="#1E1E1E"/><path d="M811 63.4 L825 71.3 L811 79.2 Z" fill="#D0D5E6" stroke="#1E8A1E" stroke-width="2" stroke-linejoin="round"/><path d="M855 83 Q845 82 845.5 73 Q846.5 66 852 63 Q851 68 854 70 Q855 63 865 60.6 Q859 66 864 72 Q867 80 858 83 Z" fill="#C3C8D6" stroke="#D4D8E4" stroke-width="1"/><path d="M875.5 70H885.3L880.4 75Z" fill="#8A8A90"/><rect x="894" y="56" width="2" height="33" fill="#A3ADCB"/><path d="M909.5 64 H916 L918 66 H930 V79 H909.5 Z" fill="#CFAE6A" stroke="#B58A2A" stroke-width="1.6"/><circle cx="926" cy="74.5" r="3.8" fill="#E2E6F2" stroke="#1A6DC0" stroke-width="1.8"/><path d="M923.3 77.5 L919.5 82.8" stroke="#1A6DC0" stroke-width="2"/><rect x="941" y="56" width="2" height="33" fill="#A3ADCB"/><rect x="957" y="63.5" width="20" height="17" fill="#D3D8E8" stroke="#333" stroke-width="1.8"/><path d="M957 68 H977" stroke="#333" stroke-width="1.8"/><path d="M955.5 78 L962 72.5 L968.5 78 M957.8 76.5 V83.5 H966.2 V76.5" fill="#FFF" stroke="#1A6DC0" stroke-width="1.8"/><rect x="989" y="78.4" width="10.600000000000023" height="1.6" fill="#1E1E1E"/><path d="M989 82.4H999.6L994.3 88.4Z" fill="#1E1E1E"/><rect x="1007.6" y="57" width="2" height="2" fill="#6B7290"/><rect x="1014.6" y="57" width="2" height="2" fill="#6B7290"/><rect x="1011.1" y="61.2" width="2" height="2" fill="#6B7290"/><rect x="1011.1" y="61.2" width="2" height="2" fill="#6B7290"/><rect x="1007.6" y="65.4" width="2" height="2" fill="#6B7290"/><rect x="1014.6" y="65.4" width="2" height="2" fill="#6B7290"/><rect x="1011.1" y="69.60000000000001" width="2" height="2" fill="#6B7290"/><rect x="1011.1" y="69.60000000000001" width="2" height="2" fill="#6B7290"/><rect x="1007.6" y="73.80000000000001" width="2" height="2" fill="#6B7290"/><rect x="1014.6" y="73.80000000000001" width="2" height="2" fill="#6B7290"/><rect x="1011.1" y="78.00000000000001" width="2" height="2" fill="#6B7290"/><rect x="1011.1" y="78.00000000000001" width="2" height="2" fill="#6B7290"/><rect x="1007.6" y="82.20000000000002" width="2" height="2" fill="#6B7290"/><rect x="1014.6" y="82.20000000000002" width="2" height="2" fill="#6B7290"/><path d="M1025.4 70 V82 H1046.4 V70" fill="none" stroke="#3A3A3A" stroke-width="2"/><rect x="1027.4" y="77" width="17" height="5" fill="#3A3A3A"/><rect x="1029.2" y="73" width="2.4" height="2.4" fill="#3A3A3A"/><rect x="1029.2" y="78.2" width="2.4" height="2.4" fill="#FFF"/><rect x="1034.7" y="73" width="2.4" height="2.4" fill="#3A3A3A"/><rect x="1034.7" y="78.2" width="2.4" height="2.4" fill="#FFF"/><rect x="1040.2" y="73" width="2.4" height="2.4" fill="#3A3A3A"/><rect x="1040.2" y="78.2" width="2.4" height="2.4" fill="#FFF"/><path d="M1035.9 60 V69 M1031.9 65.5 L1035.9 69.5 L1039.9 65.5" fill="none" stroke="#1A6DC0" stroke-width="1.8"/><path d="M1059 70 V82 H1080 V70" fill="none" stroke="#3A3A3A" stroke-width="2"/><rect x="1061" y="77" width="17" height="5" fill="#3A3A3A"/><rect x="1062.8" y="73" width="2.4" height="2.4" fill="#3A3A3A"/><rect x="1062.8" y="78.2" width="2.4" height="2.4" fill="#FFF"/><rect x="1068.3" y="73" width="2.4" height="2.4" fill="#3A3A3A"/><rect x="1068.3" y="78.2" width="2.4" height="2.4" fill="#FFF"/><rect x="1073.8" y="73" width="2.4" height="2.4" fill="#3A3A3A"/><rect x="1073.8" y="78.2" width="2.4" height="2.4" fill="#FFF"/><path d="M1069.5 60 V69 M1065.5 65.5 L1069.5 69.5 L1073.5 65.5" fill="none" stroke="#1A6DC0" stroke-width="1.8"/><rect x="1091" y="56" width="2" height="33" fill="#A3ADCB"/><path d="M1110 62 H1121 L1126 67 V82.5 H1110 Z" fill="none" stroke="#AEB6CE" stroke-width="1.6"/><path d="M1104 73 H1117 M1113.5 69.5 L1117 73 L1113.5 76.5" fill="none" stroke="#AEB6CE" stroke-width="1.6"/><rect x="1138" y="56" width="2" height="33" fill="#A3ADCB"/><path d="M1152 61 L1158 67 M1158 61 L1152 67 M1155 70 V82.5 H1173 V70" fill="none" stroke="#AEB6CE" stroke-width="1.6"/><g fill="#AEB6CE"><rect x="1163" y="69" width="3" height="3"/><rect x="1159" y="74" width="3" height="3"/><rect x="1166" y="74" width="3" height="3"/><rect x="1162" y="78.5" width="3" height="3"/></g><rect x="1187.5" y="77.7" width="10.0" height="1.6" fill="#1E1E1E"/><path d="M1187.5 81.7H1197.5L1192.5 87.7Z" fill="#1E1E1E"/><rect x="1206" y="57" width="2" height="2" fill="#6B7290"/><rect x="1213" y="57" width="2" height="2" fill="#6B7290"/><rect x="1209.5" y="61.2" width="2" height="2" fill="#6B7290"/><rect x="1209.5" y="61.2" width="2" height="2" fill="#6B7290"/><rect x="1206" y="65.4" width="2" height="2" fill="#6B7290"/><rect x="1213" y="65.4" width="2" height="2" fill="#6B7290"/><rect x="1209.5" y="69.60000000000001" width="2" height="2" fill="#6B7290"/><rect x="1209.5" y="69.60000000000001" width="2" height="2" fill="#6B7290"/><rect x="1206" y="73.80000000000001" width="2" height="2" fill="#6B7290"/><rect x="1213" y="73.80000000000001" width="2" height="2" fill="#6B7290"/><rect x="1209.5" y="78.00000000000001" width="2" height="2" fill="#6B7290"/><rect x="1209.5" y="78.00000000000001" width="2" height="2" fill="#6B7290"/><rect x="1206" y="82.20000000000002" width="2" height="2" fill="#6B7290"/><rect x="1213" y="82.20000000000002" width="2" height="2" fill="#6B7290"/><text x="1223" y="72.5" font-family="Liberation Sans" font-weight="bold" font-size="11" fill="#1E1E1E">abc</text><path d="M1226 77.5 L1230 81.5 L1239 74" fill="none" stroke="#2E9A2E" stroke-width="1.8"/><rect x="1255" y="56" width="2" height="33" fill="#A3ADCB"/><path d="M1270 61 L1270 76 L1273.5 72.5 L1277 79 L1279.5 77.5 L1276.5 71.5 L1281 71.5 Z" fill="#1A6DC0"/><path d="M1275 82 H1293 V77 H1280" fill="none" stroke="#2A2A2A" stroke-width="2"/><path d="M1311 65 H1305 V80.5 H1310" fill="none" stroke="#1A6DC0" stroke-width="1.8"/><path d="M1308.5 62 L1311.5 65 L1308.5 68" fill="none" stroke="#1A6DC0" stroke-width="1.6"/><path d="M1315 61 V82" stroke="#1E1E1E" stroke-width="2"/><g stroke="#1E1E1E" stroke-width="1.8"><path d="M1318 62.5 H1326 M1318 66.5 H1326 M1318 70.5 H1326 M1318 74.5 H1326 M1318 78.5 H1326"/></g><rect x="1336" y="56" width="2" height="33" fill="#A3ADCB"/><g stroke-width="1.8"><path d="M1352.6 65 H1357" stroke="#2A2A2A"/><path d="M1357 68 H1371.5 M1357 71.5 H1371.5 M1357 75 H1371.5" stroke="#2E9A2E"/><path d="M1357 64.5 H1371.5 M1357 80.5 H1371.5" stroke="#2A2A2A"/></g><path d="M1386 66 Q1390 60 1394 64 Q1396 68 1391 72" fill="none" stroke="#1A6DC0" stroke-width="1.8"/><path d="M1384 62 V67.5 H1389.5" fill="none" stroke="#1A6DC0" stroke-width="1.6"/><g stroke="#2A2A2A" stroke-width="1.8"><path d="M1396 65 H1407 M1396 69 H1407 M1396 73 H1407 M1394 77 H1407 M1394 81 H1407"/></g><rect x="1417" y="56" width="2" height="33" fill="#A3ADCB"/><path d="M1435.5 62 H1450 V81.5 L1442.7 74 L1435.5 81.5 Z" fill="#C8CFE6" stroke="#1E1E1E" stroke-width="2" stroke-linejoin="round"/><path d="M1469.8 62 H1485.8 V81.5 L1477.8 74 L1469.8 81.5 Z" fill="none" stroke="#AEB6CE" stroke-width="1.8"/><path d="M1501.9 62 H1517.9 V81.5 L1509.9 74 L1501.9 81.5 Z" fill="none" stroke="#AEB6CE" stroke-width="1.8"/><path d="M1536.3 62 H1552.3 V81.5 L1544.3 74 L1536.3 81.5 Z" fill="none" stroke="#AEB6CE" stroke-width="1.8"/><path d="M1466 71 H1474 M1470 67.5 L1466.5 71 L1470 74.5" fill="none" stroke="#AEB6CE" stroke-width="1.6"/><path d="M1498 71 H1507 M1503.5 67.5 L1507 71 L1503.5 74.5" fill="none" stroke="#AEB6CE" stroke-width="1.6"/><path d="M1533 61 L1538 66 M1538 61 L1533 66" fill="none" stroke="#AEB6CE" stroke-width="1.6"/><rect x="1567.6" y="77.7" width="10.0" height="1.6" fill="#1E1E1E"/><path d="M1567.6 81.7H1577.6L1572.6 87.7Z" fill="#1E1E1E"/><circle cx="2060" cy="66" r="4.8" fill="none" stroke="#1E1E1E" stroke-width="2"/><circle cx="2069" cy="66" r="4.8" fill="none" stroke="#1E1E1E" stroke-width="2"/><path d="M2055.5 72 Q2054 80 2060 81" fill="none" stroke="#1E1E1E" stroke-width="2"/><circle cx="2069.8" cy="75" r="7.5" fill="#1E8A1E" stroke="#E8F0E8" stroke-width="1.2"/><path d="M2066 75 L2068.8 77.8 L2073.8 72.5" fill="none" stroke="#FFF" stroke-width="1.7"/><path d="M2225 62 H2239 V73 L2235 77 V69 H2225 Z" fill="#CDD3E6" stroke="#2A2A2A" stroke-width="1.6"/><circle cx="2226.5" cy="70" r="4.3" fill="#CDD3E6" stroke="#2A2A2A" stroke-width="1.8"/><path d="M2219 81 Q2219 75.5 2226.5 75.5 Q2234 75.5 2234 81" fill="none" stroke="#2A2A2A" stroke-width="1.8"/><path d="M412.6 128H424.20000000000005L418.40000000000003 134.1Z" fill="#A9B4D8"/><path d="M442.3 123.5 H449.8 M443.3 123.5 V133 M448.8 123.5 V133 M440.3 133 H451.8 M446.05 133 V139" fill="none" stroke="#A9B4D8" stroke-width="1.8"/><path d="M466.8 124.2 L480.6 136.4 M480.6 124.2 L466.8 136.4" stroke="#A9B4D8" stroke-width="2"/><path d="M2166.4 128H2178.0L2172.2 134.1Z" fill="#A9B4D8"/><path d="M2197 123.5 H2204.5 M2198 123.5 V133 M2203.5 123.5 V133 M2195 133 H2206.5 M2200.75 133 V139" fill="none" stroke="#A9B4D8" stroke-width="1.8"/><path d="M2219.5 124.2 L2233.3 136.4 M2233.3 124.2 L2219.5 136.4" stroke="#A9B4D8" stroke-width="2"/><circle cx="458.5" cy="161.5" r="5" fill="none" stroke="#707070" stroke-width="3"/><path d="M454.7 165.3 L448.5 172.0" stroke="#707070" stroke-width="3.4" stroke-linecap="round"/><path d="M473.7 161.8H483L478.35 166.4Z" fill="#1E1E1E"/><circle cx="2212" cy="204.5" r="5" fill="none" stroke="#707070" stroke-width="3"/><path d="M2208.2 208.3 L2202 215.0" stroke="#707070" stroke-width="3.4" stroke-linecap="round"/><path d="M2227 205.5H2236L2231.5 210.5Z" fill="#1E1E1E"/><path d="M31.1 195.7 V204.9 H21.9 Z" fill="#1E1E1E"/><path d="M659.5 131 H666 M666 126 V136 M666 128 H671.5 M666 134 H671.5 M671.5 128 V134" fill="none" stroke="#6B4A1E" stroke-width="1.5"/><path d="M688.6 124 L702.8 136.3 M702.8 124 L688.6 136.3" stroke="#6B4A1E" stroke-width="2"/><path d="M1701 130H1712L1706.5 137Z" fill="#DDE2F2"/><path d="M1740.94 129.57 L1740.98 131.09 L1738.61 132.01 L1738.21 133.04 L1739.34 135.32 L1738.28 136.42 L1735.95 135.39 L1734.95 135.84 L1734.13 138.24 L1732.61 138.28 L1731.69 135.91 L1730.66 135.51 L1728.38 136.64 L1727.28 135.58 L1728.31 133.25 L1727.86 132.25 L1725.46 131.43 L1725.42 129.91 L1727.79 128.99 L1728.19 127.96 L1727.06 125.68 L1728.12 124.58 L1730.45 125.61 L1731.45 125.16 L1732.27 122.76 L1733.79 122.72 L1734.71 125.09 L1735.74 125.49 L1738.02 124.36 L1739.12 125.42 L1738.09 127.75 L1738.54 128.75 Z" fill="#E4E8F4"/><circle cx="1733.2" cy="130.5" r="2.6" fill="#5D6B99"/><path d="M863.4 163H871.8L867.5999999999999 167.3Z" fill="#1E1E1E"/><path d="M1239 163H1247.7L1243.35 167.3Z" fill="#1E1E1E"/><path d="M1615 163H1623.5L1619.25 167.3Z" fill="#1E1E1E"/><rect x="511.4" y="156.3" width="18.600000000000023" height="15.899999999999977" fill="#E2E4EA" stroke="#4A4A4A" stroke-width="1.6"/><text x="513.1999999999999" y="169.0" font-family="Liberation Sans" font-weight="bold" font-size="12.4" fill="#1E8A1E" textLength="15.1" lengthAdjust="spacingAndGlyphs">C#</text><path d="M1677.4 163 H1694.5 M1677.4 167.5 H1694.5 M1686 155.5 V175 M1682.5 159 L1686 155.5 L1689.5 159 M1682.5 171.5 L1686 175 L1689.5 171.5" fill="none" stroke="#1E1E1E" stroke-width="2"/><path d="M1678.8 197 L1685.75 190 L1692.7 197 Z" fill="#868AA0"/><path d="M1677 1305.4 H1694 L1685.5 1313 Z" fill="#868AA0"/><path d="M582 1334H590L586.0 1338Z" fill="#1E1E1E"/><path d="M604.5 1334 A6.3 6.3 0 1 1 615 1336 L612.5 1342" fill="none" stroke="#8B63C9" stroke-width="1.6"/><path d="M607.5 1330 L608.5 1332 M610.5 1328.5 V1331 M613 1330 L612 1332 M610.5 1333 V1340" stroke="#7A56B8" stroke-width="1.4"/><path d="M600 1335.5 Q600 1332 603 1332.5 L602 1334.5 L604 1336 L606 1335 Q606.5 1338 603.5 1338.5 L608.5 1342.5" fill="#7E55BF" stroke="#7E55BF" stroke-width="1.6"/><circle cx="667" cy="1332.5" r="7.8" fill="#1E8A1E"/><path d="M663 1332.8 L666 1335.8 L671 1330" fill="none" stroke="#FFF" stroke-width="1.8"/><rect x="896.5" y="1323" width="1.2" height="19.4" fill="#C0C4D0"/><path d="M920 1334.5 L927 1332 L931.5 1338 L927 1342.5 Z" fill="#E8D9A8" stroke="#C89B20" stroke-width="1.6" stroke-linejoin="round"/><path d="M923 1336 L929 1340" stroke="#C89B20" stroke-width="1"/><path d="M930 1332.5 L937.5 1324" stroke="#555" stroke-width="2.6" stroke-linecap="round"/><path d="M922.5 1326.5 L924 1328 L922.5 1329.5 L921 1328 Z M926.5 1323.5 L928 1325 L926.5 1326.5 L925 1325 Z" fill="#1A6DC0" stroke="#1A6DC0" stroke-width="1"/><path d="M945.5 1330H954.8L950.15 1336.3Z" fill="#1E1E1E"/><path d="M1008.7 1326 V1340.4 L1000 1333.2 Z" fill="#868AA0"/><path d="M1428 1326 V1340.4 L1437 1333.2 Z" fill="#868AA0"/><rect x="1776" y="160" width="13.5" height="15" fill="#FFF" stroke="#262626" stroke-width="1.8"/><path d="M1779 164.5 H1787 M1779 168 H1787 M1779 171.5 H1787" stroke="#262626" stroke-width="1.5"/><rect x="1765" y="166" width="17" height="15" fill="#CCD5F0"/><path d="M1766.50 170.10 L1769.01 168.75 L1772.99 171.67 L1772.99 174.83 L1769.01 177.75 L1766.50 176.40 Z M1768.75 171.67 L1768.75 174.83 L1770.74 173.25 Z M1772.99 171.67 L1778.01 166.50 L1781.50 168.30 L1781.50 178.20 L1778.01 180.00 L1772.99 174.83 Z M1778.01 170.55 L1775.01 173.25 L1778.01 175.95 Z" fill="#8A50D0" fill-rule="evenodd" opacity="1"/><rect x="1800.2" y="154.4" width="2" height="31" fill="#A3ADCB"/><path d="M1815.8 158.4 H1823.8 L1820.5 162 V165 L1819 164 V162 Z" fill="#1A6DC0"/><circle cx="1828.6" cy="171.9" r="7.3" fill="#CCD0DC" stroke="#262626" stroke-width="2"/><path d="M1828.6 167 V172.5 H1833" fill="none" stroke="#262626" stroke-width="1.6"/><path d="M1850.2 168H1858.9L1854.5500000000002 172.7Z" fill="#1E1E1E"/><path d="M1872 167.5 H1890.5 M1876.5 164 L1872 167.5 M1872 173.5 H1890.5 M1886 177 L1890.5 173.5" fill="none" stroke="#262626" stroke-width="2"/><path d="M1908.5 163 A9 9 0 1 0 1916 161.5" fill="none" stroke="#1A73C8" stroke-width="2.2"/><path d="M1911 157.5 L1916.5 161.5 L1912 166" fill="none" stroke="#1A73C8" stroke-width="2"/><path d="M1942 169.5 L1949.3 163 L1956.6 169.5 M1942 176.5 L1949.3 170 L1956.6 176.5" fill="none" stroke="#262626" stroke-width="2"/><rect x="1979" y="160" width="14" height="15" fill="#D8DCE8" stroke="#555" stroke-width="1.8"/><rect x="1973" y="166" width="13" height="14" fill="#C9CDDA" stroke="#333" stroke-width="1.8"/><rect x="2004" y="154.4" width="2" height="31" fill="#A3ADCB"/><path d="M2028 166.4 L2023 170.3 L2028 174.3 M2032 166.4 L2037 170.3 L2032 174.3" fill="none" stroke="#262626" stroke-width="2"/><g transform="translate(2053.6 159.5) scale(1.0)"><path d="M2 19 L12 9" stroke="#262626" stroke-width="4.4" stroke-linecap="round"/><path d="M2 19 L12 9" stroke="#8C8C8C" stroke-width="1.6" stroke-linecap="round"/><path d="M11 10 A5.5 5.5 0 0 1 17 1.5 L14.5 5 L16.5 7 L20 4.5 A5.5 5.5 0 0 1 12.5 11 Z" fill="#262626"/></g><rect x="2082" y="152.2" width="32" height="35.5" fill="#FFEBC2" stroke="#7B5A0A" stroke-width="2.2"/><rect x="2090" y="170.3" width="13" height="4.5" fill="#FFF" stroke="#262626" stroke-width="1.5"/><path d="M2086.3 174.8 H2090" stroke="#262626" stroke-width="1.5"/><path d="M2105 162 L2106 165 M2109 164.5 L2107.5 167 M2108 170 H2111" stroke="#C8A020" stroke-width="1.5"/><rect x="1779" y="234" width="19.5" height="18.5" fill="#E4E6EE" stroke="#555" stroke-width="1.6"/><path d="M1779 238.5 H1798.5" stroke="#555" stroke-width="1.6"/><rect x="1785" y="241" width="15" height="14" fill="#F5F6FB"/><path d="M1786.00 245.20 L1788.17 244.00 L1791.63 246.60 L1791.63 249.40 L1788.17 252.00 L1786.00 250.80 Z M1787.95 246.60 L1787.95 249.40 L1789.68 248.00 Z M1791.63 246.60 L1795.97 242.00 L1799.00 243.60 L1799.00 252.40 L1795.97 254.00 L1791.63 249.40 Z M1795.97 245.60 L1793.37 248.00 L1795.97 250.40 Z" fill="#8A50D0" fill-rule="evenodd" opacity="1"/><path d="M1781.7 269.4 V278.3 H1772 Z" fill="#1E1E1E"/><rect x="1806.3" y="266" width="19.100000000000136" height="15.699999999999989" fill="#E2E4EA" stroke="#4A4A4A" stroke-width="1.6"/><text x="1808.1" y="278.5" font-family="Liberation Sans" font-weight="bold" font-size="12.7" fill="#1E8A1E" textLength="15.6" lengthAdjust="spacingAndGlyphs">C#</text><path d="M1808.8 299.6 V308.4 H1799.4 Z" fill="#1E1E1E"/><g transform="translate(1832 293.5) scale(1.0)"><path d="M2 19 L12 9" stroke="#262626" stroke-width="4.4" stroke-linecap="round"/><path d="M2 19 L12 9" stroke="#8C8C8C" stroke-width="1.6" stroke-linecap="round"/><path d="M11 10 A5.5 5.5 0 0 1 17 1.5 L14.5 5 L16.5 7 L20 4.5 A5.5 5.5 0 0 1 12.5 11 Z" fill="#262626"/></g><text x="1858.5" y="340.5" font-family="Liberation Sans" font-weight="bold" font-size="15" fill="#1E8A1E" letter-spacing="-0.5">C#</text><path d="M1827 358.2 L1833.5 363.4 L1827 368.6 Z" fill="none" stroke="#1E1E1E" stroke-width="1.8" stroke-linejoin="round"/><rect x="1865.5" y="354.5" width="12.5" height="13" fill="#F0F1F5" stroke="#3A3A3A" stroke-width="1.5"/><rect x="1861" y="359" width="12.5" height="14.5" fill="#F0F1F5" stroke="#1E1E1E" stroke-width="1.8"/><path d="M1864 364 H1870 M1864 367 H1870 M1864 370 H1868" stroke="#1E1E1E" stroke-width="1.4"/><path d="M1827 388.3 L1833.5 393.55 L1827 398.8 Z" fill="none" stroke="#1E1E1E" stroke-width="1.8" stroke-linejoin="round"/><path d="M1879.21 392.13 L1879.40 393.97 L1876.83 395.33 L1876.44 396.64 L1877.83 399.19 L1876.67 400.62 L1873.89 399.77 L1872.69 400.42 L1871.87 403.21 L1870.03 403.40 L1868.67 400.83 L1867.36 400.44 L1864.81 401.83 L1863.38 400.67 L1864.23 397.89 L1863.58 396.69 L1860.79 395.87 L1860.60 394.03 L1863.17 392.67 L1863.56 391.36 L1862.17 388.81 L1863.33 387.38 L1866.11 388.23 L1867.31 387.58 L1868.13 384.79 L1869.97 384.60 L1871.33 387.17 L1872.64 387.56 L1875.19 386.17 L1876.62 387.33 L1875.77 390.11 L1876.42 391.31 Z" fill="#F5F6FB" stroke="#262626" stroke-width="1.8" stroke-linejoin="round"/><circle cx="1870" cy="394" r="3.4" fill="none" stroke="#262626" stroke-width="1.8"/><path d="M1799.3 417.6 L1807.0 423.45000000000005 L1799.3 429.3 Z" fill="none" stroke="#1E1E1E" stroke-width="1.8" stroke-linejoin="round"/><rect x="1832" y="421.5" width="6.5" height="6.5" fill="#F0F1F5" stroke="#262626" stroke-width="1.5"/><rect x="1845" y="416" width="9" height="7" fill="#D9DCE6" stroke="#555" stroke-width="1.4"/><rect x="1842" y="421" width="9.5" height="8" fill="#D9DCE6" stroke="#262626" stroke-width="1.6"/><path d="M1838.5 424.5 H1842" stroke="#262626" stroke-width="1.5"/><path d="M1837 445 H1847.5 L1852 449.5 V465.5 H1837 Z" fill="#E4E6EE" stroke="#555" stroke-width="1.5"/><g transform="translate(1831 447) scale(0.85)"><path d="M2 19 L12 9" stroke="#1E1E1E" stroke-width="4.4" stroke-linecap="round"/><path d="M2 19 L12 9" stroke="#1E1E1E" stroke-width="1.6" stroke-linecap="round"/><path d="M11 10 A5.5 5.5 0 0 1 17 1.5 L14.5 5 L16.5 7 L20 4.5 A5.5 5.5 0 0 1 12.5 11 Z" fill="#1E1E1E"/></g><path d="M1808.6 479.5 V489.8 H1799 Z" fill="#1E1E1E"/><rect x="1833" y="474.5" width="19.5" height="17.5" fill="#F0F1F5" stroke="#555" stroke-width="1.6"/><path d="M1833 479 H1852.5" stroke="#555" stroke-width="1.6"/><rect x="1836" y="484" width="5.5" height="5" fill="none" stroke="#8A50D0" stroke-width="1.5"/><rect x="1844" y="482.5" width="5.5" height="5" fill="none" stroke="#8A50D0" stroke-width="1.5"/><path d="M1827.5 508 L1833.3 513.85 L1827.5 519.7 Z" fill="none" stroke="#1E1E1E" stroke-width="1.8" stroke-linejoin="round"/><path d="M1862 506.4 H1871.5 L1876.5 511.4 V523.9 H1862 Z" fill="#E4E6EE" stroke="#3A3A3A" stroke-width="1.6"/><path d="M1858 504.9 H1864.5 M1862.5 502.9 L1864.5 504.9 L1862.5 506.9" fill="none" stroke="#1A73C8" stroke-width="1.5"/><path d="M1862 536.4 H1871.5 L1876.5 541.4 V553.9 H1862 Z" fill="#E4E6EE" stroke="#3A3A3A" stroke-width="1.6"/><path d="M1858 534.9 H1864.5 M1862.5 532.9 L1864.5 534.9 L1862.5 536.9" fill="none" stroke="#1A73C8" stroke-width="1.5"/><path d="M1800 567.4 L1806.3 573.3 L1800 579.2 Z" fill="none" stroke="#1E1E1E" stroke-width="1.8" stroke-linejoin="round"/><text x="1832" y="580.5" font-family="Liberation Sans" font-weight="bold" font-size="15" fill="#1E8A1E" letter-spacing="-0.5">C#</text><path d="M2217 1420.5 H2233 Q2230 1417 2230.5 1411 Q2230.5 1403.5 2225 1403.5 Q2219.5 1403.5 2219.5 1411 Q2220 1417 2217 1420.5 Z" fill="none" stroke="#FFF" stroke-width="1.6"/><path d="M2223 1422 Q2225 1425 2227 1422" fill="none" stroke="#FFF" stroke-width="1.4"/><path d="M6.5 1402.5 H29.5 V1420.5 H21.5 L17.5 1424.8 L13.5 1420.5 H6.5 Z" fill="none" stroke="#FFF" stroke-width="1.7"/></svg>
</body></html>
